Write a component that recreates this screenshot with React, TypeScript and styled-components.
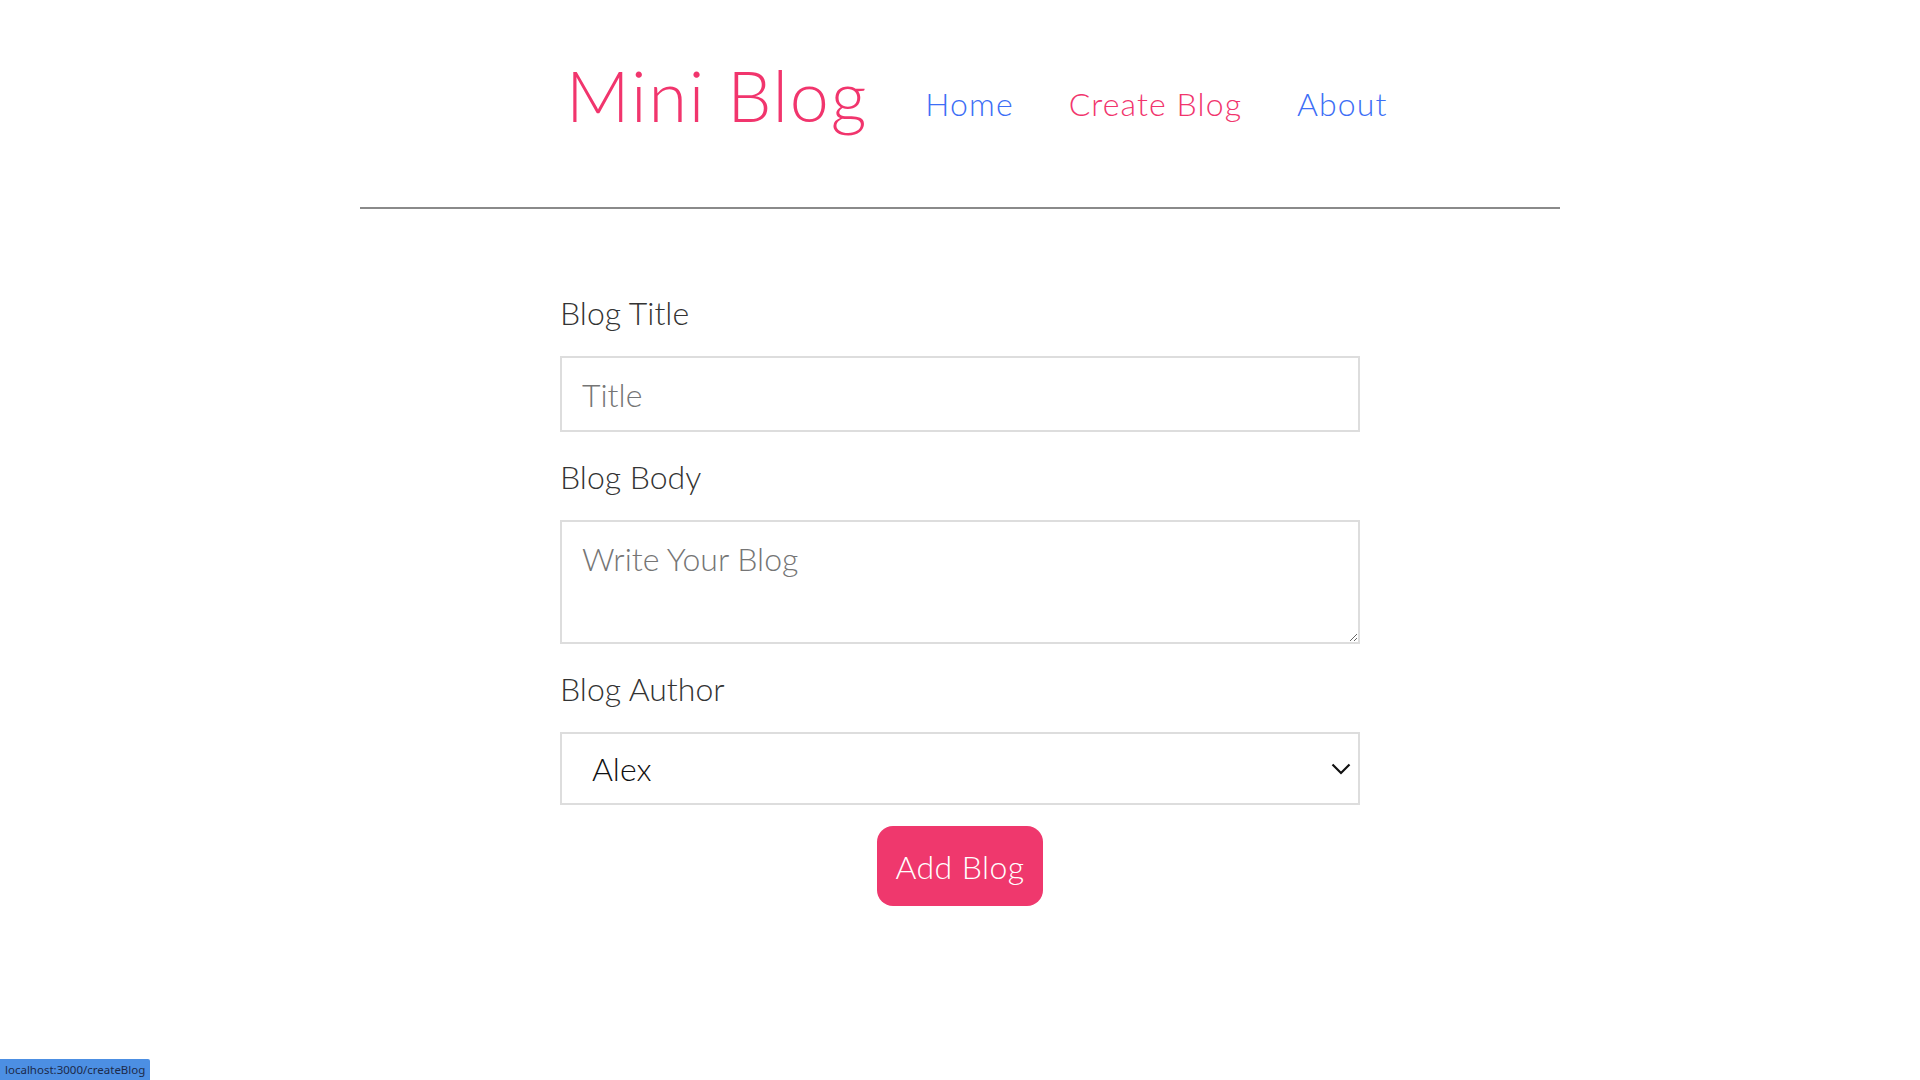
import React from "react";
import styled, { createGlobalStyle } from "styled-components";

const GlobalStyle = createGlobalStyle`
  html, body {
    margin: 0;
    padding: 0;
    background: #ffffff;
  }
  * {
    box-sizing: border-box;
    font-family: Lato, "Open Sans", Arial, sans-serif;
  }
`;

const Header = styled.nav`
  width: 1200px;
  height: 209px;
  margin: 0 auto;
  padding-left: 206px;
  display: flex;
  align-items: flex-start;
  border-bottom: 2px solid #8a8a8a;
`;

const Brand = styled.h1`
  margin: 53px 0 0 0;
  font-size: 70px;
  font-weight: 300;
  letter-spacing: 1.9px;
  line-height: normal;
  color: #f1356d;
`;

const Links = styled.div`
  margin-top: 84px;
  display: flex;
`;

const NavLink = styled.a<{ $active?: boolean; $first?: boolean }>`
  margin-left: ${(p) => (p.$first ? "57px" : "55px")};
  font-size: 32px;
  font-weight: 300;
  letter-spacing: 1.1px;
  line-height: normal;
  text-decoration: none;
  color: ${(p) => (p.$active ? "#f1356d" : "#3d6ef6")};
  cursor: pointer;
`;

const Form = styled.form`
  width: 800px;
  margin: 84px auto 0;
  display: flex;
  flex-direction: column;
`;

const Label = styled.label`
  display: block;
  font-size: 32px;
  font-weight: 300;
  line-height: 40px;
  color: #333;
  margin-bottom: 23px;
`;

const fieldBase = `
  width: 100%;
  display: block;
  border: 2px solid #dddddd;
  background: #ffffff;
  color: #222;
  font-size: 32px;
  font-weight: 300;
  outline: none;
`;

const TextInput = styled.input`
  ${fieldBase}
  height: 76px;
  padding: 0 20px;
  margin-bottom: 25px;
  &::placeholder {
    color: #757575;
  }
`;

const TextArea = styled.textarea`
  ${fieldBase}
  height: 124px;
  padding: 17px 20px 12px;
  line-height: 40px;
  margin-bottom: 25px;
  resize: vertical;
  &::placeholder {
    color: #757575;
  }
`;

const SelectWrap = styled.div`
  position: relative;
  margin-bottom: 21px;
`;

const Select = styled.select`
  ${fieldBase}
  height: 73px;
  padding: 0 60px 0 30px;
  appearance: none;
  -webkit-appearance: none;
  color: #111;
  border-radius: 0;
`;

const Chevron = styled.svg`
  position: absolute;
  right: 9px;
  top: 31px;
  pointer-events: none;
`;

const ButtonRow = styled.div`
  display: flex;
  justify-content: center;
`;

const AddButton = styled.button`
  width: 166px;
  height: 80px;
  border: 0;
  border-radius: 16px;
  background: #ef386d;
  color: #ffffff;
  font-size: 32px;
  font-weight: 300;
  letter-spacing: 0.4px;
  cursor: pointer;
`;

const StatusBubble = styled.div`
  position: fixed;
  left: 0;
  bottom: 0;
  height: 21px;
  padding: 0 5px;
  display: flex;
  align-items: center;
  background: #4c8fe3;
  border-top-right-radius: 2px;
  color: #1c2a4a;
  font-size: 11.5px;
  font-family: "Noto Sans", "DejaVu Sans", sans-serif;
`;

export default function App() {
  return (
    <>
      <GlobalStyle />
      <Header>
        <Brand>Mini Blog</Brand>
        <Links>
          <NavLink $first href="#/">
            Home
          </NavLink>
          <NavLink $active href="#/createBlog">
            Create Blog
          </NavLink>
          <NavLink href="#/about">About</NavLink>
        </Links>
      </Header>
      <Form onSubmit={(e) => e.preventDefault()}>
        <Label>Blog Title</Label>
        <TextInput type="text" placeholder="Title" />
        <Label>Blog Body</Label>
        <TextArea placeholder="Write Your Blog" />
        <Label>Blog Author</Label>
        <SelectWrap>
          <Select defaultValue="Alex">
            <option value="Alex">Alex</option>
            <option value="Sam">Sam</option>
          </Select>
          <Chevron width="20" height="12" viewBox="0 0 20 12">
            <path d="M1.5 1.5 L10 10 L18.5 1.5" fill="none" stroke="#111" strokeWidth="2.2" />
          </Chevron>
        </SelectWrap>
        <ButtonRow>
          <AddButton type="submit">Add Blog</AddButton>
        </ButtonRow>
      </Form>
      <StatusBubble>localhost:3000/createBlog</StatusBubble>
    </>
  );
}
